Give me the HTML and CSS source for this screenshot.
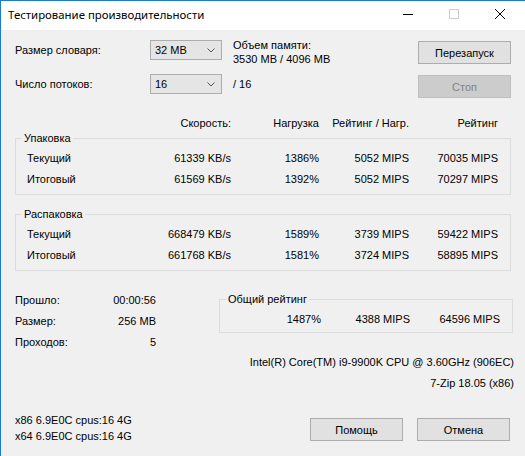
FILE: index.html
```html
<!DOCTYPE html>
<html lang="ru">
<head>
<meta charset="utf-8">
<title>Тестирование производительности</title>
<link rel="stylesheet" href="styles.css">
</head>
<body>
<div class="window">
  <div class="titlebar">
    <span class="title">Тестирование производительности</span>
    <div class="controls">
      <span class="ctl"><svg width="10" height="10" viewBox="0 0 10 10"><path d="M0 5.5H10" stroke="#000" stroke-width="1"/></svg></span>
      <span class="ctl"><svg width="10" height="10" viewBox="0 0 10 10"><rect x="0.5" y="0.5" width="9" height="9" fill="none" stroke="#cccccc" stroke-width="1"/></svg></span>
      <span class="ctl"><svg width="10" height="10" viewBox="0 0 10 10"><path d="M0 0L10 10M10 0L0 10" stroke="#000" stroke-width="1"/></svg></span>
    </div>
  </div>
  <div class="client">
    <div class="top">
      <span class="lbl">Размер словаря:</span>
      <div class="combo"><span>32 MB</span><svg class="chev" width="8" height="5" viewBox="0 0 8 5"><path d="M0.5 0.5L4 4L7.5 0.5" fill="none" stroke="#555" stroke-width="1"/></svg></div>
      <div class="info mem">Объем памяти:<br>3530 MB / 4096 MB</div>
      <button class="btn">Перезапуск</button>

      <span class="lbl">Число потоков:</span>
      <div class="combo"><span>16</span><svg class="chev" width="8" height="5" viewBox="0 0 8 5"><path d="M0.5 0.5L4 4L7.5 0.5" fill="none" stroke="#555" stroke-width="1"/></svg></div>
      <div class="info threads">/ 16</div>
      <button class="btn disabled">Стоп</button>
    </div>

    <div class="hdr">
      <span></span><span>Скорость:</span><span>Нагрузка</span><span>Рейтинг / Нагр.</span><span>Рейтинг</span>
    </div>

    <fieldset class="group g1">
      <legend>Упаковка</legend>
      <div class="res">
        <span class="name">Текущий</span><span>61339 KB/s</span><span>1386%</span><span>5052 MIPS</span><span>70035 MIPS</span>
        <span class="name">Итоговый</span><span>61569 KB/s</span><span>1392%</span><span>5052 MIPS</span><span>70297 MIPS</span>
      </div>
    </fieldset>

    <fieldset class="group g2">
      <legend>Распаковка</legend>
      <div class="res">
        <span class="name">Текущий</span><span>668479 KB/s</span><span>1589%</span><span>3739 MIPS</span><span>59422 MIPS</span>
        <span class="name">Итоговый</span><span>661768 KB/s</span><span>1581%</span><span>3724 MIPS</span><span>58895 MIPS</span>
      </div>
    </fieldset>

    <div class="bottom">
      <div class="stats">
        <span>Прошло:</span><span class="v">00:00:56</span>
        <span>Размер:</span><span class="v">256 MB</span>
        <span>Проходов:</span><span class="v">5</span>
      </div>
      <fieldset class="group g3">
        <legend>Общий рейтинг</legend>
        <div class="total">
          <span>1487%</span><span>4388 MIPS</span><span>64596 MIPS</span>
        </div>
      </fieldset>
    </div>

    <div class="sys">
      <div>Intel(R) Core(TM) i9-9900K CPU @ 3.60GHz (906EC)</div>
      <div>7-Zip 18.05 (x86)</div>
    </div>

    <div class="footer">
      <div class="ver">
        <div>x86 6.9E0C cpus:16 4G</div>
        <div>x64 6.9E0C cpus:16 4G</div>
      </div>
      <div class="fbtns">
        <button class="btn">Помощь</button>
        <button class="btn">Отмена</button>
      </div>
    </div>
  </div>
</div>
</body>
</html>
```

FILE: styles.css
```css
* { box-sizing: border-box; }
html, body { margin: 0; padding: 0; background: #f0f0f0; }
.window {
  width: 525px;
  height: 456px;
  border-left: 1px solid #1b7ad1;
  border-top: 1px solid #1b7ad1;
  background: #f0f0f0;
  font-family: "Liberation Sans", Arial, sans-serif;
  font-size: 11px;
  color: #000;
  overflow: hidden;
}
.titlebar {
  height: 29px;
  background: #fff;
  display: flex;
  align-items: center;
  padding: 0 2px 3px 7px;
}
.title {
  font-family: "Noto Sans", "Open Sans", sans-serif;
  font-size: 11.4px;
  flex: 1;
}
.controls { display: flex; }
.ctl {
  width: 46px;
  display: flex;
  justify-content: center;
  align-items: center;
  height: 10px;
}
.ctl svg { display: block; }
.client { padding: 10px 0 0 14px; }
.top {
  display: grid;
  grid-template-columns: 135px 72px 196px 93px;
  grid-template-rows: 23px 23px;
  row-gap: 11px;
}
.lbl { line-height: 20px; }
.combo {
  height: 20px;
  border: 1px solid #adadad;
  background: #e5e5e5;
  display: flex;
  align-items: center;
  justify-content: space-between;
  padding: 0 6px 0 4px;
}
.chev { display: block; }
.info { padding-left: 11px; }
.mem { line-height: 14px; margin-top: -2px; }
.threads { line-height: 20px; }
.btn {
  width: 93px;
  height: 23px;
  border: 1px solid #adadad;
  background: #e1e1e1;
  font-family: "Liberation Sans", Arial, sans-serif;
  font-size: 11px;
  color: #000;
  padding: 0;
  margin: 1px 0 0;
}
.btn.disabled {
  background: #cccccc;
  border-color: #bfbfbf;
  color: #838383;
}
.hdr {
  margin-top: 19px;
  display: grid;
  grid-template-columns: 111px 105px 88px 90px 89px;
  line-height: 14px;
  text-align: right;
}
.group {
  margin: 0;
  padding: 2px 0 5px;
  border: 1px solid #dcdcdc;
  min-width: 0;
}
.group legend {
  padding: 0 2px;
  margin-left: 6px;
  line-height: 14px;
}
.g1 { width: 496px; margin-top: 1px; }
.g2 { width: 496px; margin-top: 12px; }
.res {
  display: grid;
  grid-template-columns: 110px 105px 88px 90px 89px;
  grid-auto-rows: 21px;
  align-items: center;
  text-align: right;
}
.res .name { text-align: left; padding-left: 11px; }
.bottom {
  display: flex;
  align-items: flex-start;
  margin-top: 18px;
}
.stats {
  width: 141px;
  display: grid;
  grid-template-columns: 1fr auto;
  grid-auto-rows: 21px;
  align-items: center;
}
.stats .v { text-align: right; }
.g3 {
  width: 294px;
  margin-left: 63px;
  margin-top: 3px;
  padding: 3px 0 2px;
}
.total {
  display: grid;
  grid-template-columns: 101px 89px 90px;
  text-align: right;
  line-height: 21px;
}
.sys {
  margin-top: 0;
  padding-right: 11px;
  text-align: right;
  line-height: 21px;
}
.footer {
  display: flex;
  justify-content: space-between;
  align-items: flex-start;
  padding-right: 15px;
}
.ver { margin-top: 18px; line-height: 16px; }
.fbtns { display: flex; gap: 14px; margin-top: 23px; }
```
